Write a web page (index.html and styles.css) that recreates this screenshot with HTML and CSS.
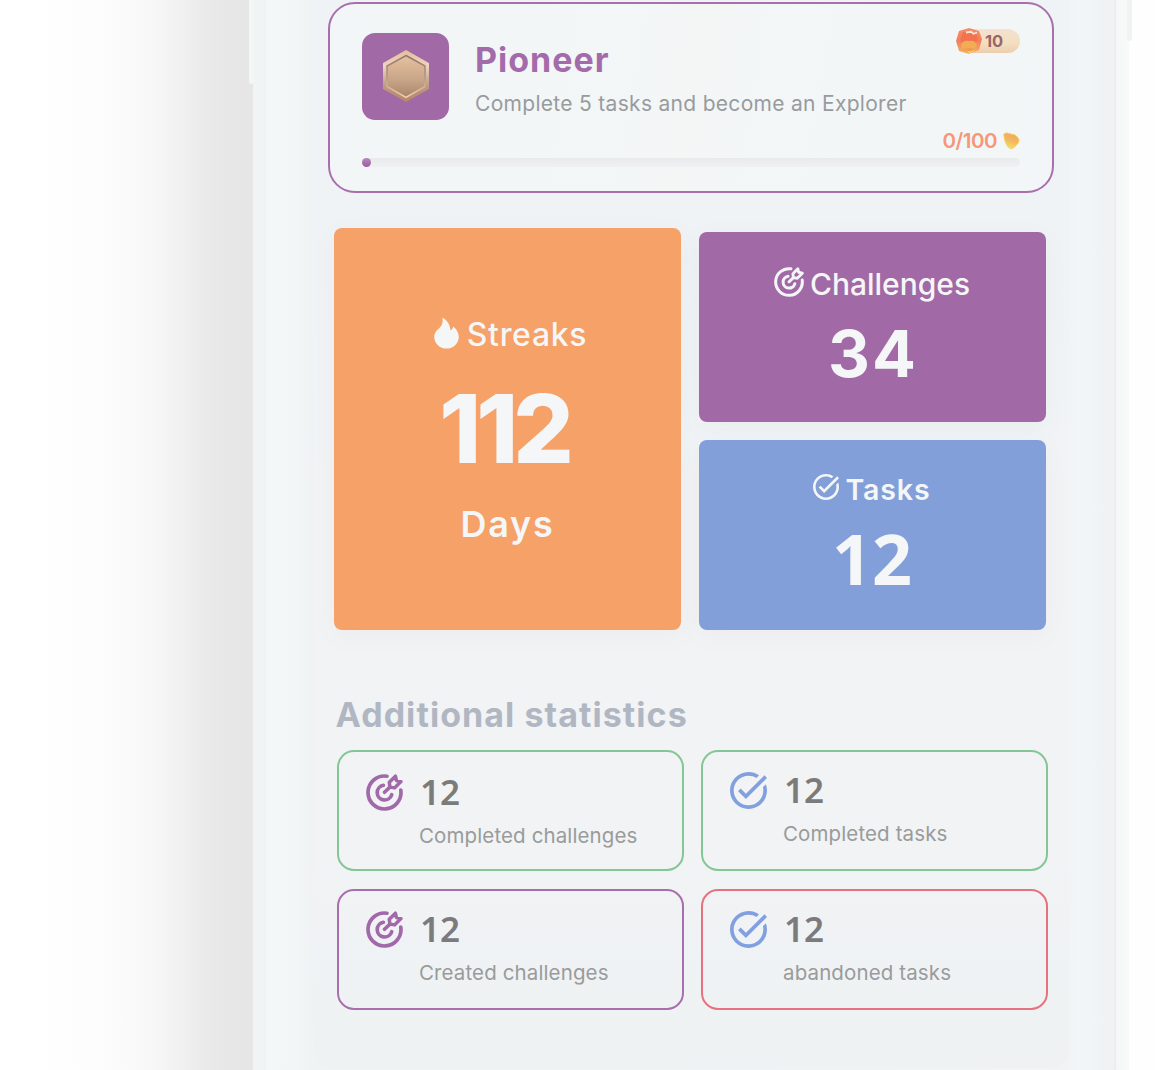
FILE: index.html
```html
<!DOCTYPE html>
<html lang="en">
<head>
<meta charset="utf-8">
<title>Statistics</title>
<link rel="stylesheet" href="styles.css">
</head>
<body>
<svg class="defs" aria-hidden="true">
  <symbol id="target" viewBox="0 0 20 20">
    <g fill="none" stroke="currentColor" stroke-linecap="round" stroke-linejoin="round">
      <path stroke-width="2" d="M11.300 1.200A8.900 8.900 0 1 0 18.800 8.700"/>
      <path stroke-width="2" d="M9.400 6.100A4 4 0 1 0 13.900 11.200"/>
      <path stroke-width="1.900" d="M10 9.900 12.900 7.100M12.900 7.100 12.600 4.500 15.900 1.200 16.400 3.500 18.900 4.100 15.500 7.500Z"/>
    </g>
  </symbol>
  <symbol id="check" viewBox="2 2 20 20">
    <path fill="currentColor" d="M22 5.180 10.590 16.600l-4.240-4.240 1.410-1.410 2.830 2.830 10-10L22 5.180zm-2.210 5.040c.13.57.21 1.170.21 1.780 0 4.420-3.580 8-8 8s-8-3.580-8-8 3.580-8 8-8c1.580 0 3.040.46 4.280 1.250l1.440-1.440A9.900 9.900 0 0 0 12 2C6.480 2 2 6.480 2 12s4.480 10 10 10 10-4.480 10-10c0-1.190-.22-2.330-.6-3.390l-1.610 1.610z"/>
  </symbol>
</svg>
<div class="phone">
  <i class="side side-left"></i><i class="side side-right"></i>
  <main class="screen">
    <section class="level">
      <div class="level-top">
        <div class="medal">
          <svg width="46" height="52" viewBox="0 0 46 52">
            <defs>
              <linearGradient id="rim" x2="0" y2="1"><stop stop-color="#e4bf9e"/><stop offset=".3" stop-color="#f0d3c0"/><stop offset=".7" stop-color="#bd9a83"/><stop offset="1" stop-color="#b98568"/></linearGradient>
              <linearGradient id="face" x2="0" y2="1"><stop stop-color="#e5c1a1"/><stop offset=".6" stop-color="#c8a487"/><stop offset="1" stop-color="#a98367"/></linearGradient>
              <linearGradient id="edge" x2="0" y2="1"><stop stop-color="#8e7768"/><stop offset=".5" stop-color="#b39580"/><stop offset="1" stop-color="#f2d2b3"/></linearGradient>
            </defs>
            <path fill="url(#rim)" stroke="url(#rim)" stroke-width="2" stroke-linejoin="round" d="M23 1 45 13.500V38.500L23 51 1 38.500V13.500Z"/>
            <path fill="url(#face)" stroke="url(#edge)" stroke-width="1.500" d="M23 5.500 42 16V36.500L23 47.500 4 36.500V16Z"/>
          </svg>
        </div>
        <div class="level-text">
          <h1>Pioneer</h1>
          <p>Complete 5 tasks and become an Explorer</p>
        </div>
        <div class="reward">
          <svg class="gem" width="28" height="28" viewBox="0 0 28 28">
            <defs><linearGradient id="gem" x2="0" y2="1"><stop stop-color="#f48c68"/><stop offset=".5" stop-color="#f47f5d"/><stop offset="1" stop-color="#f3b45f"/></linearGradient></defs>
            <path fill="url(#gem)" d="M4 4 14 1 24 4 27 12 24 23 14 27 4 24 1 14Z"/>
            <path fill="#f2744f" d="M8 5 21 5 23 13 20 16H7L5 13Z"/>
            <path fill="#f3ab55" d="M6 18Q8 13 14 14 20 13 22 18L20 23H8Z"/>
            <path fill="#ef9a50" d="M8 22 14 21 21 22 14 25Z"/>
            <path fill="#f8d67b" d="M12 23.500 15 24.500 21 22.500 14.500 26.500Z"/>
            <path fill="none" stroke="#fde7d5" stroke-width="1.800" d="M11 5.500 16 4.800 18.500 6.800 22 5.500"/>
          </svg>
          <span>10</span>
        </div>
      </div>
      <div class="points"><span>0/100</span>
        <svg width="17" height="18" viewBox="0 0 17 18"><defs><linearGradient id="nug" x1=".7" x2=".4" y2="1"><stop stop-color="#f3a562"/><stop offset=".5" stop-color="#f2b75f"/><stop offset="1" stop-color="#f4e068"/></linearGradient></defs><path fill="url(#nug)" stroke="#f3cf62" stroke-width="1" d="M.8 2.500Q1 .8 4 1L12 3Q16 5.500 16 8.500 16 11 13 13.500 10 17 7.500 16.500 5 16 3.500 12.500Q1 8 .8 2.500Z"/></svg>
      </div>
      <div class="track"><div class="fill"></div></div>
    </section>

    <section class="tiles">
      <article class="tile streaks">
        <h2><svg width="25" height="32" viewBox="0 0 25 32"><path fill="currentColor" d="M8.500.5Q15.500 4.500 16.700 13.500 18.500 12.500 19.300 9.500 24.800 14 24.800 20A12.300 11.500 0 0 1 .2 20Q.2 15 5 11.500 9.500 7.500 8.500.5Z"/></svg><span>Streaks</span></h2>
        <strong>112</strong>
        <span class="unit">Days</span>
      </article>
      <article class="tile challenges">
        <h2><svg width="30" height="30"><use href="#target"/></svg><span>Challenges</span></h2>
        <strong>34</strong>
      </article>
      <article class="tile tasks">
        <h2><svg width="26" height="26"><use href="#check"/></svg><span>Tasks</span></h2>
        <strong>12</strong>
      </article>
    </section>

    <h3>Additional statistics</h3>
    <section class="stats">
      <article class="stat green low"><svg class="violet" width="37" height="37"><use href="#target"/></svg><div><b>12</b><p>Completed challenges</p></div></article>
      <article class="stat green"><svg class="blue" width="37" height="37"><use href="#check"/></svg><div><b>12</b><p>Completed tasks</p></div></article>
      <article class="stat purple"><svg class="violet" width="37" height="37"><use href="#target"/></svg><div><b>12</b><p>Created challenges</p></div></article>
      <article class="stat red"><svg class="blue" width="37" height="37"><use href="#check"/></svg><div><b>12</b><p>abandoned tasks</p></div></article>
    </section>
  </main>
</div>
</body>
</html>
```
FILE: styles.css
```css
* { box-sizing: border-box; }
body, h1, h2, h3, p { margin: 0; }
body {
  height: 1070px;
  overflow: hidden;
  font-family: Inter, "Liberation Sans", sans-serif;
  background: linear-gradient(90deg, #fff 0, #fefefe 68px, #fbfbfb 120px, #f7f7f7 155px, #f1f1f1 180px, #ebebeb 202px, #e7e7e7 225px, #e6e6e6 253px, #fefefe 254px);
}
svg { display: block; flex: none; }
.defs { display: none; }

.phone {
  position: relative;
  width: 876px;
  height: 1070px;
  margin-left: 253px;
  padding-left: 61px;
  background: linear-gradient(90deg, #f1f4f4 0, #f1f4f4 11px, #e9eff0 12px, #f3f7f8 13px, #f2f6f7 40px, #eff3f4 61px, #f1f3f5 815px, #f3f6f8 825px, #eff3f4 850px, #f1f3f3 861px, #e8ebeb 862px, #f6f8f7 864px, #f8f9f9 876px);
}
.side { position: absolute; top: 0; width: 5px; }
.side-left { left: -4px; height: 84px; background: #f4f5f5; border-radius: 0 0 5px 2px; }
.side-right { left: 874px; height: 41px; background: #f1f3f3; border-radius: 0 0 3px 2px; }

.screen {
  width: 755px;
  height: 1068px;
  padding: 2px 14px 0;
  border-radius: 0 0 18px 18px;
  background: linear-gradient(180deg, #eff3f5, #f1f3f5 45%, #f1f3f5 80%, #eef2f3);
}

.level {
  width: 726px;
  height: 190.500px;
  padding: 28.500px 32px 0;
  border: 2px solid #a86fae;
  border-radius: 27px;
  background: linear-gradient(100deg, #f2f6f8, #f4f6f6 50%, #f2f6f8);
}
.level-top { display: flex; height: 97px; }
.medal {
  display: flex;
  align-items: center;
  justify-content: center;
  width: 87px;
  height: 87px;
  border-radius: 13px;
  background: #a169a5;
}
.level-text { flex: 1; padding: 7.500px 0 0 26px; white-space: nowrap; }
h1 { font-size: 34px; line-height: 40px; font-weight: 700; letter-spacing: 1px; color: #a46bab; }
.level-text p { margin-top: 9px; font-size: 21px; line-height: 30px; letter-spacing: .3px; color: #989b9e; }
.reward {
  display: flex;
  align-items: center;
  width: 61px;
  height: 24px;
  margin-top: -3.500px;
  border-radius: 12px;
  background: linear-gradient(#f4e1cf, #f3dfbf 60%, #ebcdae);
}
.gem { margin-left: -4px; }
.reward span { margin-left: 2px; font-size: 16.500px; font-weight: 700; color: #98666a; }
.points {
  display: flex;
  align-items: center;
  justify-content: flex-end;
  gap: 6px;
  height: 22px;
  font-size: 20.500px;
  line-height: 22px;
  font-weight: 600;
  letter-spacing: -.5px;
  color: #f69778;
}
.track { height: 9px; margin-top: 6.500px; border-radius: 5px; background: linear-gradient(#e8eaeb, #f0f1f2); }
.fill { width: 9px; height: 9px; border-radius: 50%; background: linear-gradient(#b789bb, #9a5ca2); }

.tiles {
  display: grid;
  grid-template: 194.500px 190.500px / 347px 347px;
  gap: 17.500px;
  height: 403px;
  margin: 35px 0 0 6px;
}
.tile {
  display: flex;
  flex-direction: column;
  align-items: center;
  border-radius: 8px;
  color: #f4f6f7;
  box-shadow: 0 6px 24px rgba(110, 120, 120, .05);
}
.tile h2 { display: flex; align-items: center; font-weight: 500; line-height: 36px; }
.streaks { grid-row: span 2; padding-top: 87.500px; background: #f5a167; }
.streaks h2 { gap: 8px; height: 40px; padding-left: 6px; font-size: 32px; letter-spacing: .7px; }
.streaks svg { margin-top: -4px; }
.streaks strong { margin-top: 28.500px; padding-right: 7px; font-size: 95px; line-height: 90px; font-weight: 800; letter-spacing: -5px; }
.unit { margin-top: 30px; font-size: 36px; line-height: 40px; font-weight: 600; letter-spacing: 1.800px; }
.challenges { margin-top: 4px; padding-top: 34px; background: #a169a5; }
.challenges h2 { gap: 6px; font-size: 30px; }
.challenges svg { margin-top: -4px; }
.challenges strong { margin-top: 22.500px; padding-left: 2px; font-size: 65px; line-height: 60px; font-weight: 700; letter-spacing: 2px; }
.tasks { padding-top: 32px; background: #829fd9; }
.tasks h2 { gap: 6px; font-size: 28.500px; font-weight: 600; letter-spacing: .9px; }
.tasks svg { margin-top: -5px; }
.tasks strong { margin-top: 20px; font: 700 70px/60px "Noto Sans", sans-serif; }

h3 { margin: 64px 0 0 7.500px; font-size: 34px; line-height: 40px; font-weight: 700; letter-spacing: 1.050px; color: #b0b7c3; white-space: nowrap; }
.stats {
  display: grid;
  grid-template-columns: 347px 347px;
  grid-auto-rows: 121px;
  gap: 18px 17px;
  margin: 15px 0 0 8.500px;
}
.stat { display: flex; padding: 20px 0 0 27.500px; border: 2px solid; border-radius: 17px; }
.stat.low { padding-top: 22px; }
.stat div { padding-left: 16px; }
.stat b { display: block; margin-left: 1px; font: 600 35px/36px "Noto Sans", sans-serif; color: #7b7b7b; }
.stat p { margin-top: 11px; font-size: 20.500px; line-height: 30px; letter-spacing: .12px; color: #999b9b; white-space: nowrap; }
.green { border-color: #83c794; }
.purple { border-color: #a86fae; }
.red { border-color: #e6727f; }
.violet { color: #a169aa; }
.blue { color: #82a0df; }
```
